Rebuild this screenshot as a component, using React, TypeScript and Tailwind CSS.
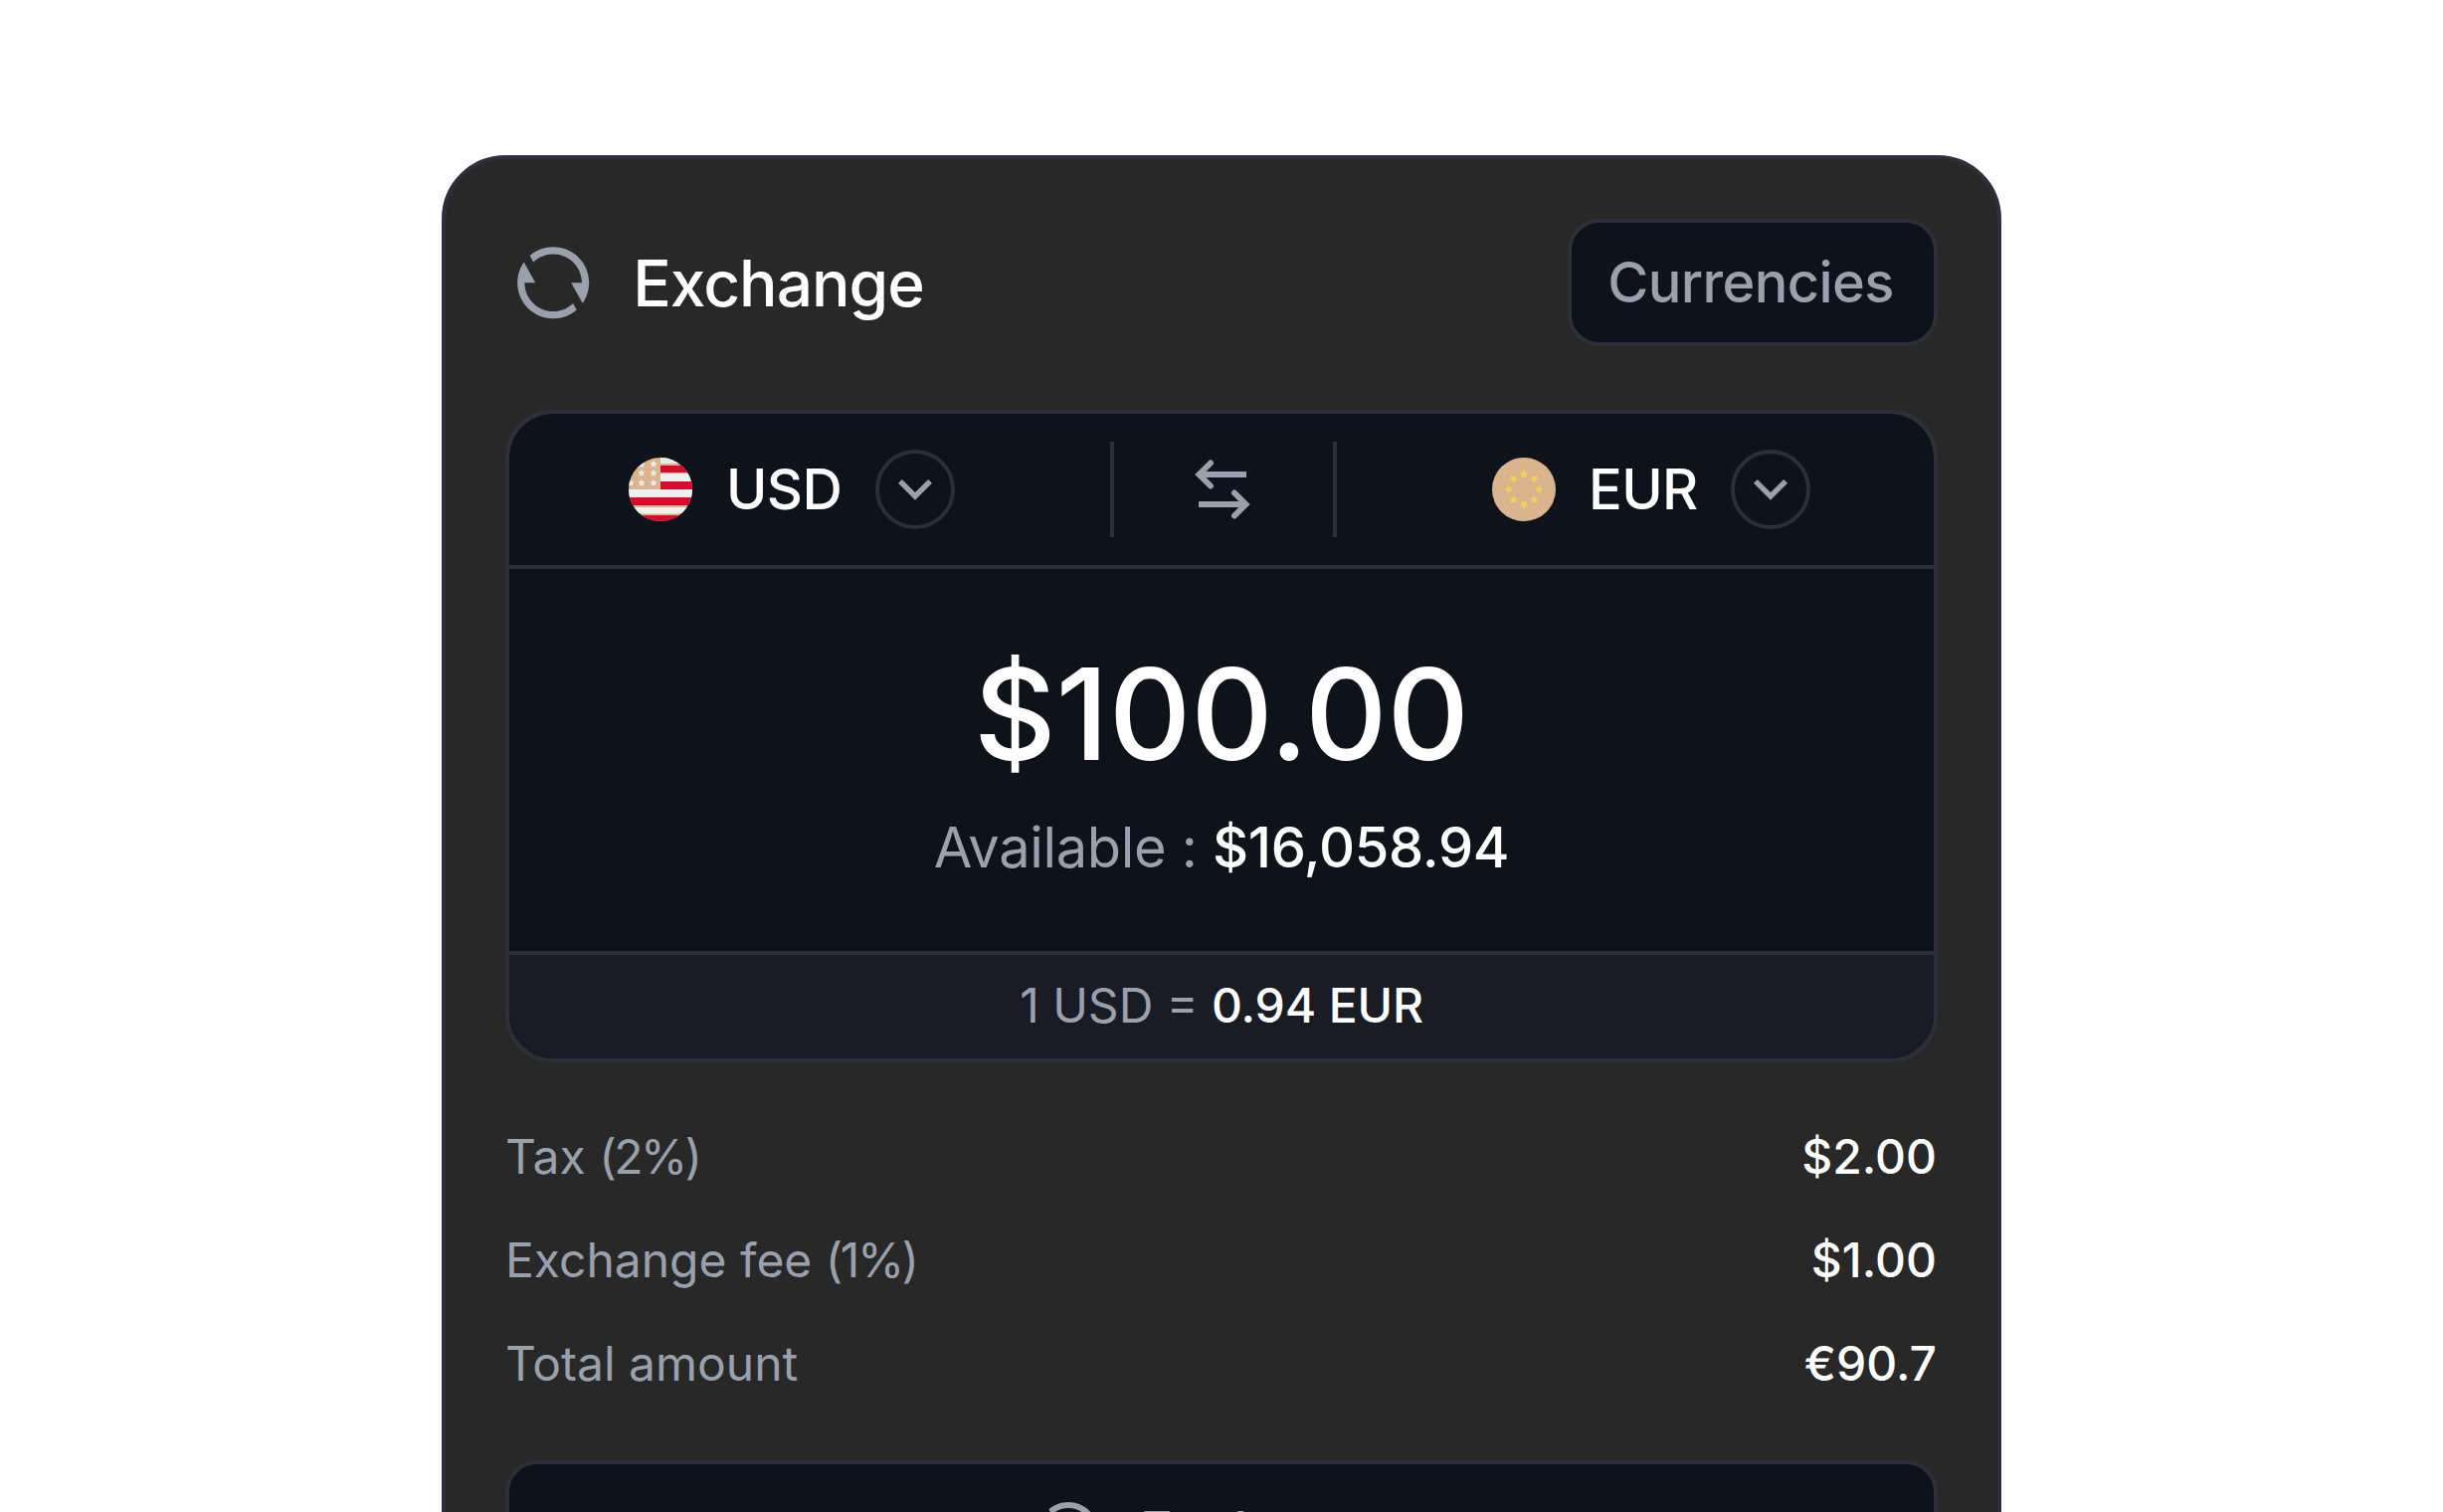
import React from "react";
import { RiArrowDownSLine, RiRefreshLine } from "react-icons/ri";

type Fee = {
  label: string;
  percent?: string;
  value: string;
};

const fees: Fee[] = [
  { label: "Tax", percent: "(2%)", value: "$2.00" },
  { label: "Exchange fee", percent: "(1%)", value: "$1.00" },
  { label: "Total amount", value: "€90.7" },
];

const starPoints = (cx: number, cy: number, r: number) =>
  Array.from({ length: 10 }, (_, i) => {
    const radius = i % 2 === 0 ? r : r * 0.5;
    const angle = ((i * 36 - 90) * Math.PI) / 180;
    return `${(cx + radius * Math.cos(angle)).toFixed(2)},${(
      cy +
      radius * Math.sin(angle)
    ).toFixed(2)}`;
  }).join(" ");

const usStars = [
  [13, 7],
  [25, 6.5],
  [2, 25.5],
  [13, 15.5],
  [25, 15.5],
  [13, 25.5],
  [25, 25.5],
];

const UsdFlag = () => (
  <svg viewBox="0 0 64 64" className="size-16 shrink-0">
    <clipPath id="usd-flag">
      <circle cx="32" cy="32" r="32" />
    </clipPath>
    <g clipPath="url(#usd-flag)">
      <rect width="64" height="64" fill="#d9b48c" />
      <rect x="32" width="32" height="6" fill="#ebebeb" />
      <rect x="32" y="8" width="32" height="7.5" fill="#d80b2c" />
      <rect x="32" y="15.5" width="32" height="8.5" fill="#f0f0f0" />
      <rect x="32" y="24" width="32" height="8" fill="#d80b2c" />
      <rect y="32" width="64" height="8" fill="#f0f0f0" />
      <rect y="40" width="64" height="8" fill="#d80b2c" />
      <rect y="50" width="64" height="6.5" fill="#f0f0f0" />
      <rect y="58" width="64" height="6" fill="#d80b2c" />
      {usStars.map(([x, y]) => (
        <polygon key={`${x}-${y}`} points={starPoints(x, y, 4)} fill="#ebebeb" />
      ))}
    </g>
  </svg>
);

const EurFlag = () => (
  <svg viewBox="0 0 64 64" className="size-16 shrink-0">
    <circle cx="32" cy="32" r="32" fill="#d9b48c" />
    {[0, 45, 90, 135, 180, 225, 270, 315].map((angle) => (
      <polygon
        key={angle}
        points={starPoints(32, 17, 4.4)}
        transform={`rotate(${angle} 32 32)`}
        fill="#f3d057"
      />
    ))}
  </svg>
);

const SwapIcon = () => (
  <svg
    viewBox="0 0 56 60"
    className="h-[60px] w-14"
    fill="none"
    stroke="#99a0ae"
    strokeWidth="6"
  >
    <path d="M52 15H4M4 45H52" />
    <path d="M16 3.5L4.5 15L16 26.5M40 33.5L51.5 45L40 56.5" strokeLinecap="round" />
  </svg>
);

const DropdownButton = () => (
  <button className="flex size-20 items-center justify-center rounded-full border-4 border-[#2b2f3a] text-[#99a0ae]">
    <RiArrowDownSLine className="size-16 shrink-0" />
  </button>
);

const App = () => {
  return (
    <div className="h-[1520px] overflow-hidden bg-white pt-[156px] font-['Inter',sans-serif]">
      <div className="mx-auto h-[1600px] w-[1568px] rounded-[64px] border-4 border-[#2b303b] bg-[#282828] px-[60px] pt-[60px]">
        {/* header */}
        <div className="flex h-32 items-center justify-between">
          <div className="flex items-center pl-[4.8px]">
            <RiRefreshLine className="size-[86.4px] text-[#99a0ae]" />
            <h1 className="ml-[37px] pt-[2px] text-[64px] leading-[80px] font-medium tracking-[-0.015em] text-white">
              Exchange
            </h1>
          </div>
          <button className="flex h-32 w-[372px] items-center justify-center rounded-[32px] border-4 border-[#2b303b] bg-[#0e121b] pr-1 text-[56px] leading-[80px] font-medium tracking-[-0.011em] text-[#99a0ae]">
            Currencies
          </button>
        </div>
        {/* converter */}
        <div className="mt-16 h-[656px] overflow-hidden rounded-[48px] border-4 border-[#2b303b] bg-[#0e121b]">
          {/* currencies */}
          <div className="flex h-[156px] items-center border-b-4 border-[#2b303b]">
            <div className="flex w-[604px] items-center pl-[120px]">
              <UsdFlag />
              <span className="ml-[34px] w-[150px] text-[56px] leading-[80px] font-medium tracking-[-0.011em] text-white">
                USD
              </span>
              <DropdownButton />
            </div>
            <div className="flex h-24 w-[228px] justify-center border-x-4 border-[#2b303b] pt-[18px] pr-[3px]">
              <SwapIcon />
            </div>
            <div className="flex flex-1 items-center pl-[156px]">
              <EurFlag />
              <span className="ml-[33px] w-[143px] text-[56px] leading-[80px] font-medium tracking-[-0.011em] text-white">
                EUR
              </span>
              <DropdownButton />
            </div>
          </div>
          {/* amount */}
          <div className="flex h-96 flex-col items-center pt-[74px] text-white">
            <div className="text-[128px] leading-[144px] font-medium">
              $100.00
            </div>
            <div className="mt-[22px] text-[56px] leading-[80px] tracking-[-0.006em]">
              <span className="text-[#99a0ae]">Available :</span>{" "}
              <span className="font-medium">$16,058.94</span>
            </div>
          </div>
          {/* rate */}
          <div className="flex h-[108px] items-center justify-center border-t-4 border-[#2b303b] bg-[#191b25] pb-[2px] text-[48px] leading-[72px]">
            <p className="text-white">
              <span className="text-[#99a0ae]">1 USD =</span>{" "}
              <span className="font-medium tracking-[-0.003em]">0.94 EUR</span>
            </p>
          </div>
        </div>
        {/* fees */}
        <div className="mt-[59px] flex flex-col gap-8 text-[48px] leading-[72px]">
          {fees.map((fee) => (
            <div key={fee.label} className="flex justify-between pr-px">
              <span className="text-[#99a0ae]">
                {fee.label}{" "}
                {fee.percent && (
                  <span className="tracking-[-2.5px]">{fee.percent}</span>
                )}
              </span>
              <span className="font-medium text-white">{fee.value}</span>
            </div>
          ))}
        </div>
        {/* submit */}
        <button className="mt-[61px] flex h-36 w-full items-center justify-center rounded-[32px] border-4 border-[#2b303b] bg-[#0e121b] pr-[14px] text-[#99a0ae]">
          <RiRefreshLine className="size-[72px]" />
          <span className="ml-9 text-[56px] leading-[80px] font-medium tracking-[-0.011em]">
            Exchange
          </span>
        </button>
      </div>
    </div>
  );
};

export default App;
